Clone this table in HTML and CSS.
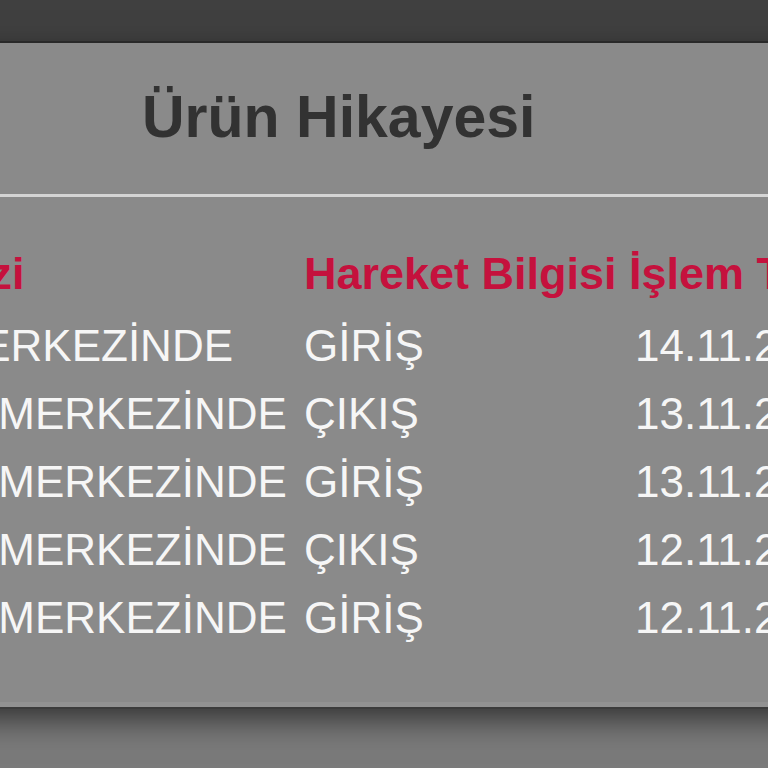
FILE: index.html
```html
<!DOCTYPE html>
<html lang="tr">
<head>
<meta charset="utf-8">
<title>Ürün Hikayesi</title>
<link rel="stylesheet" href="styles.css">
</head>
<body>
<div class="topbar"></div>
<div class="modal">
  <div class="modal-header">
    <h2 class="modal-title">Ürün Hikayesi</h2>
  </div>
  <div class="modal-body">
    <table class="history">
      <thead>
        <tr>
          <th class="c1">Şube Merkezi</th>
          <th class="c2">Hareket Bilgisi</th>
          <th class="c3">İşlem Tarihi</th>
        </tr>
      </thead>
      <tbody>
        <tr><td class="c1">DAĞITIM MERKEZİNDE</td><td class="c2">GİRİŞ</td><td class="c3 date">14.11.2014 09:42</td></tr>
        <tr><td class="c1">TRANSFER MERKEZİNDE</td><td class="c2">ÇIKIŞ</td><td class="c3 date">13.11.2014 22:15</td></tr>
        <tr><td class="c1">TRANSFER MERKEZİNDE</td><td class="c2">GİRİŞ</td><td class="c3 date">13.11.2014 06:30</td></tr>
        <tr><td class="c1">TRANSFER MERKEZİNDE</td><td class="c2">ÇIKIŞ</td><td class="c3 date">12.11.2014 21:05</td></tr>
        <tr><td class="c1">TRANSFER MERKEZİNDE</td><td class="c2">GİRİŞ</td><td class="c3 date">12.11.2014 17:48</td></tr>
      </tbody>
    </table>
  </div>
</div>
</body>
</html>
```

FILE: styles.css
```css
html, body {
  margin: 0;
  padding: 0;
}
body {
  background: #7a7a7a;
  font-family: "Liberation Sans", Arial, sans-serif;
  overflow: hidden;
  width: 768px;
  height: 768px;
}
.topbar {
  height: 41px;
  background: #404040;
  border-bottom: 2px solid #2f2f2f;
}
.modal {
  margin-left: -300px;
  width: 1400px;
  background: #8a8a8a;
  border-bottom: 5px solid #929292;
  box-shadow: 0 2px 0 #3c3c3c, 0 12px 30px rgba(0, 0, 0, 0.6);
  position: relative;
}
.modal-header {
  padding: 41px 0 44px 442px;
  border-bottom: 3px solid #d4d4d4;
}
.modal-title {
  margin: 0;
  font-size: 59px;
  line-height: 66px;
  font-weight: bold;
  color: #323232;
  white-space: nowrap;
}
.modal-body {
  padding: 43px 0 50px 31px;
}
.history {
  border-collapse: collapse;
  white-space: nowrap;
}
.history th {
  font-size: 45px;
  line-height: 52px;
  font-weight: bold;
  color: #c5113d;
  text-align: left;
  padding: 8px 6px 12px;
}
.history td {
  font-size: 44px;
  line-height: 52px;
  color: #f6f6f6;
  padding: 8px 6px;
  text-align: left;
}
.history td.c1 {
  width: 543px;
  padding-left: 18px;
}
.history .c2 {
  width: 313px;
}
.history td.date {
  padding-left: 12px;
}
```
